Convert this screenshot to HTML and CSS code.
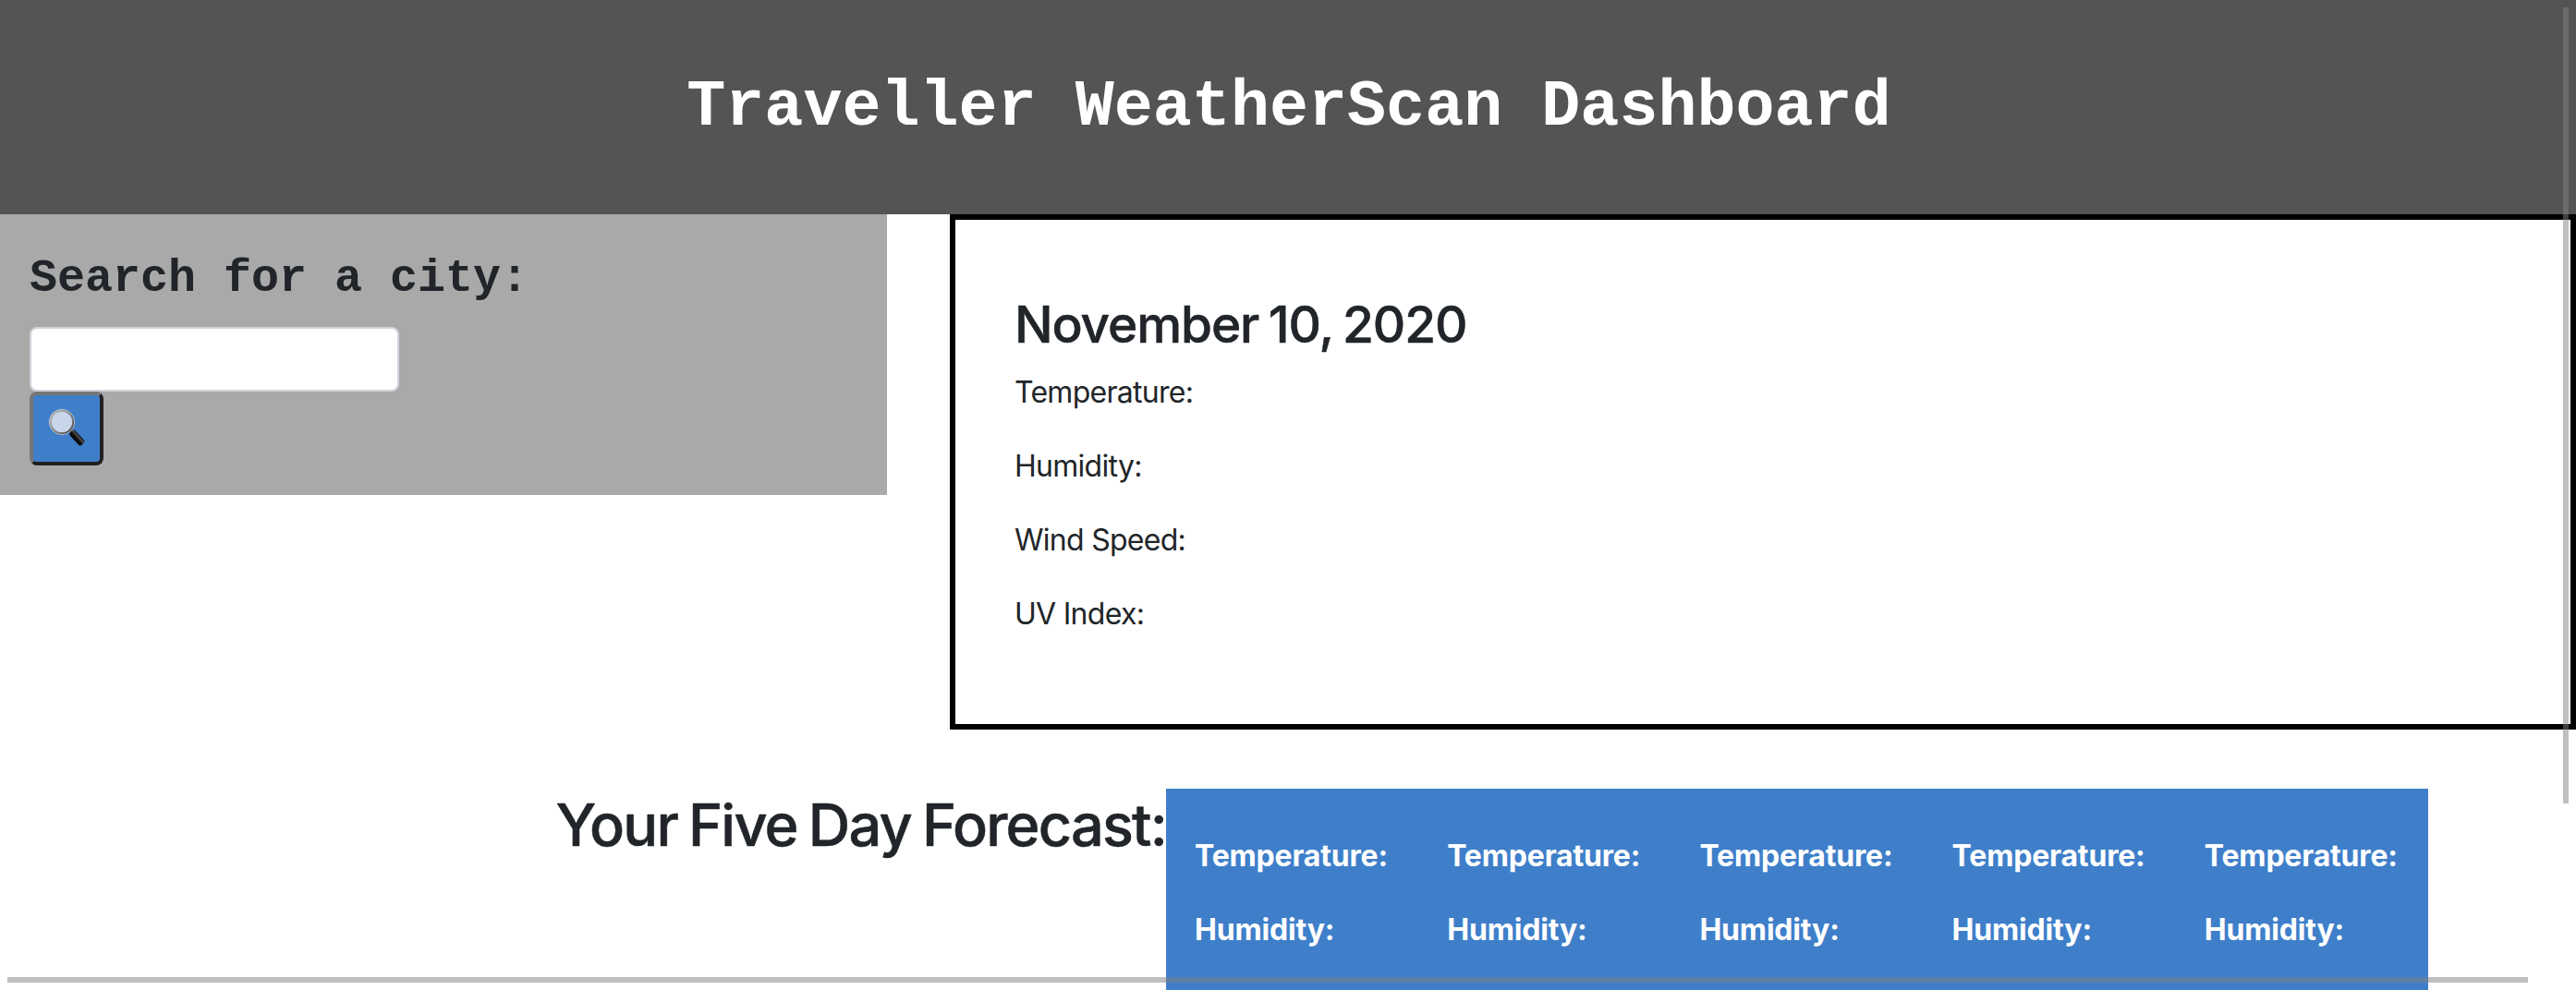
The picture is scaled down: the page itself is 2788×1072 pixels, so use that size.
FILE: index.html
```html
<!DOCTYPE html>
<html lang="en">
<head>
<meta charset="utf-8">
<title>Traveller WeatherScan Dashboard</title>
<link rel="stylesheet" href="styles.css">
</head>
<body>
<header class="banner"><h1 class="banner-title">Traveller WeatherScan Dashboard</h1></header>
<main>
  <div class="top-row">
    <aside class="search">
      <h2 class="search-title">Search for a city:</h2>
      <form class="search-form">
        <input class="search-input" type="text" aria-label="City">
        <button class="search-button" type="button" aria-label="Search">
          <svg class="lens" viewBox="0 0 44 44" width="44" height="44">
            <defs>
              <linearGradient id="rim" x1="0" y1="0" x2="1" y2="1"><stop offset="0" stop-color="#bbb"/><stop offset=".5" stop-color="#888"/><stop offset="1" stop-color="#3c3c3c"/></linearGradient>
              <linearGradient id="grip" x1="0" y1="0" x2="1" y2="0"><stop offset="0" stop-color="#050505"/><stop offset=".5" stop-color="#151515"/><stop offset=".68" stop-color="#555"/><stop offset="1" stop-color="#111"/></linearGradient>
            </defs>
            <path d="M26 26l4 4" stroke="#555" stroke-width="3"/>
            <circle cx="17" cy="17" r="12.4" fill="#c7d6ea" stroke="url(#rim)" stroke-width="2.4"/>
            <circle cx="17" cy="17" r="13.7" fill="none" stroke="#d8d8d8" stroke-width=".7"/>
            <rect x="-3.9" y="-9.3" width="7.8" height="18.6" rx="2.6" transform="translate(33.3 34) rotate(-42)" fill="url(#grip)"/>
          </svg>
        </button>
      </form>
    </aside>
    <section class="today">
      <h2 class="today-date">November 10, 2020</h2>
      <p class="reading">Temperature:</p>
      <p class="reading">Humidity:</p>
      <p class="reading">Wind Speed:</p>
      <p class="reading">UV Index:</p>
    </section>
  </div>
  <div class="forecast">
    <h1 class="forecast-title">Your Five Day Forecast:</h1>
    <div class="days">
      <div class="day"><p>Temperature:</p><p>Humidity:</p></div>
      <div class="day"><p>Temperature:</p><p>Humidity:</p></div>
      <div class="day"><p>Temperature:</p><p>Humidity:</p></div>
      <div class="day"><p>Temperature:</p><p>Humidity:</p></div>
      <div class="day"><p>Temperature:</p><p>Humidity:</p></div>
    </div>
  </div>
</main>
<div class="scroll scroll-y"></div>
<div class="scroll scroll-x"></div>
</body>
</html>
```
FILE: styles.css
```css
* { box-sizing: border-box; }
body {
  margin: 0;
  height: 1072px;
  overflow: hidden;
  position: relative;
  background: #fff;
  color: #212529;
  font: 400 32px/48px Inter, sans-serif;
}
h1, h2, p { margin: 0; }
.banner { height: 232px; padding: 75px 0 0 2px; background: #545454; color: #fff; text-align: center; }
.banner-title { font: 700 70px/84px "Courier New", "Liberation Mono", monospace; letter-spacing: .04px; }
.top-row { display: flex; justify-content: space-between; align-items: flex-start; }
.search { width: 960px; height: 304px; padding: 40px 32px 32px; background: #a9a9a9; }
.search-title { margin-bottom: 22px; font: 700 50px/60px "Courier New", "Liberation Mono", monospace; }
.search-form { display: flex; flex-direction: column; align-items: flex-start; }
.search-input { width: 400px; height: 70px; padding: 12px 24px; border: 2px solid #ced4da; border-radius: 8px; background: #fff; font: inherit; }
.search-button {
  display: flex;
  width: 80px;
  height: 80px;
  padding: 12px 0 0 14px;
  border: 4px solid;
  border-color: #767676 #212121 #212121 #767676;
  border-radius: 8px;
  background: #3f7fca;
}
.lens { display: block; }
.today { width: 1760px; height: 558px; padding: 80px 64px 64px; border: 6px solid #000; }
.today-date { margin-bottom: 16px; font-size: 55px; line-height: 67px; font-weight: 500; letter-spacing: -1.1px; word-spacing: -3px; -webkit-text-stroke: .5px; }
.reading { margin-bottom: 32px; letter-spacing: -.72px; }
.forecast { display: flex; margin-top: 64px; padding-right: 160px; justify-content: flex-end; }
.forecast-title { padding-top: 1px; font-size: 63px; line-height: 77px; font-weight: 500; letter-spacing: -1.8px; word-spacing: -3px; white-space: nowrap; -webkit-text-stroke: .5px; }
.days { display: grid; grid-template-columns: repeat(5, 1fr); width: 1366px; height: 218px; background: #3f7fca; color: #fff; font-weight: 700; letter-spacing: -.18px; }
.day { padding: 49px 31px 0; }
.day p + p { margin-top: 32px; }
.day p { white-space: nowrap; }
/* translucent overlay scroll thumbs */
.scroll { position: absolute; background: rgba(128, 128, 128, .5); }
.scroll-y { left: 2774px; top: 8px; width: 6px; height: 862px; }
.scroll-x { left: 8px; top: 1058px; width: 2728px; height: 6px; }
```
